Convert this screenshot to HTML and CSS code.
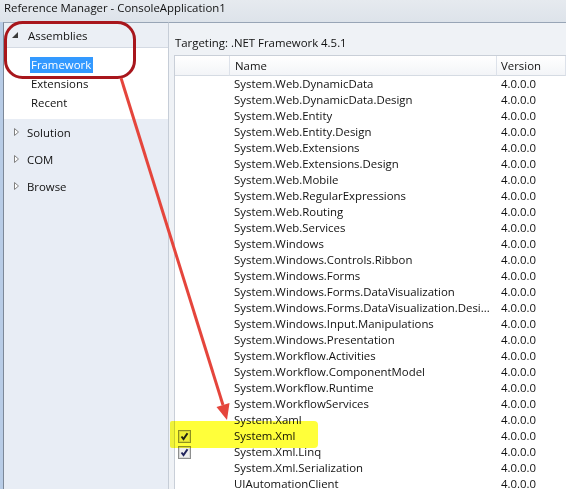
FILE: index.html
```
<!DOCTYPE html>
<html>
<head>
<meta charset="utf-8">
<link rel="stylesheet" href="styles.css">
</head>
<body>
<div class="window">
  <div class="titlebar">Reference Manager - ConsoleApplication1</div>
  <div class="main">
    <div class="nav">
      <div class="nav-head">
        <svg class="tri-open" width="6" height="6" viewBox="0 0 6 6"><polygon points="6,0 6,6 0,6"/></svg>
        <span>Assemblies</span>
      </div>
      <div class="nav-sub">
        <div class="sub-item"><span class="sel">Framework</span></div>
        <div class="sub-item"><span>Extensions</span></div>
        <div class="sub-item"><span>Recent</span></div>
      </div>
      <div class="nav-item"><svg class="tri-closed" width="5" height="8" viewBox="0 0 5 8"><polygon points="0.5,0.5 4.5,4 0.5,7.5"/></svg><span>Solution</span></div>
      <div class="nav-item"><svg class="tri-closed" width="5" height="8" viewBox="0 0 5 8"><polygon points="0.5,0.5 4.5,4 0.5,7.5"/></svg><span>COM</span></div>
      <div class="nav-item"><svg class="tri-closed" width="5" height="8" viewBox="0 0 5 8"><polygon points="0.5,0.5 4.5,4 0.5,7.5"/></svg><span>Browse</span></div>
    </div>
    <div class="content">
      <div class="targeting">Targeting: .NET Framework 4.5.1</div>
      <div class="list">
        <div class="row head">
          <div class="cell check"></div>
          <div class="cell name">Name</div>
          <div class="cell ver">Version</div>
        </div>
        <div class="row"><div class="cell check"></div><div class="cell name">System.Web.DynamicData</div><div class="cell ver">4.0.0.0</div></div>
        <div class="row"><div class="cell check"></div><div class="cell name">System.Web.DynamicData.Design</div><div class="cell ver">4.0.0.0</div></div>
        <div class="row"><div class="cell check"></div><div class="cell name">System.Web.Entity</div><div class="cell ver">4.0.0.0</div></div>
        <div class="row"><div class="cell check"></div><div class="cell name">System.Web.Entity.Design</div><div class="cell ver">4.0.0.0</div></div>
        <div class="row"><div class="cell check"></div><div class="cell name">System.Web.Extensions</div><div class="cell ver">4.0.0.0</div></div>
        <div class="row"><div class="cell check"></div><div class="cell name">System.Web.Extensions.Design</div><div class="cell ver">4.0.0.0</div></div>
        <div class="row"><div class="cell check"></div><div class="cell name">System.Web.Mobile</div><div class="cell ver">4.0.0.0</div></div>
        <div class="row"><div class="cell check"></div><div class="cell name">System.Web.RegularExpressions</div><div class="cell ver">4.0.0.0</div></div>
        <div class="row"><div class="cell check"></div><div class="cell name">System.Web.Routing</div><div class="cell ver">4.0.0.0</div></div>
        <div class="row"><div class="cell check"></div><div class="cell name">System.Web.Services</div><div class="cell ver">4.0.0.0</div></div>
        <div class="row"><div class="cell check"></div><div class="cell name">System.Windows</div><div class="cell ver">4.0.0.0</div></div>
        <div class="row"><div class="cell check"></div><div class="cell name">System.Windows.Controls.Ribbon</div><div class="cell ver">4.0.0.0</div></div>
        <div class="row"><div class="cell check"></div><div class="cell name">System.Windows.Forms</div><div class="cell ver">4.0.0.0</div></div>
        <div class="row"><div class="cell check"></div><div class="cell name">System.Windows.Forms.DataVisualization</div><div class="cell ver">4.0.0.0</div></div>
        <div class="row"><div class="cell check"></div><div class="cell name">System.Windows.Forms.DataVisualization.Desi...</div><div class="cell ver">4.0.0.0</div></div>
        <div class="row"><div class="cell check"></div><div class="cell name">System.Windows.Input.Manipulations</div><div class="cell ver">4.0.0.0</div></div>
        <div class="row"><div class="cell check"></div><div class="cell name">System.Windows.Presentation</div><div class="cell ver">4.0.0.0</div></div>
        <div class="row"><div class="cell check"></div><div class="cell name">System.Workflow.Activities</div><div class="cell ver">4.0.0.0</div></div>
        <div class="row"><div class="cell check"></div><div class="cell name">System.Workflow.ComponentModel</div><div class="cell ver">4.0.0.0</div></div>
        <div class="row"><div class="cell check"></div><div class="cell name">System.Workflow.Runtime</div><div class="cell ver">4.0.0.0</div></div>
        <div class="row"><div class="cell check"></div><div class="cell name">System.WorkflowServices</div><div class="cell ver">4.0.0.0</div></div>
        <div class="row"><div class="cell check"></div><div class="cell name">System.Xaml</div><div class="cell ver">4.0.0.0</div></div>
        <div class="row"><div class="cell check"><svg class="cb" width="13" height="13" viewBox="0 0 13 13"><rect x="0.5" y="0.5" width="12" height="12" class="cb-out"/><rect x="1.5" y="1.5" width="10" height="10" class="cb-in"/><path d="M3.5 6.5 L5.5 9 L9.5 3.2" class="cb-mark"/></svg></div><div class="cell name">System.Xml</div><div class="cell ver">4.0.0.0</div></div>
        <div class="row"><div class="cell check"><svg class="cb" width="13" height="13" viewBox="0 0 13 13"><rect x="0.5" y="0.5" width="12" height="12" class="cb-out"/><rect x="1.5" y="1.5" width="10" height="10" class="cb-in"/><path d="M3.5 6.5 L5.5 9 L9.5 3.2" class="cb-mark"/></svg></div><div class="cell name">System.Xml.Linq</div><div class="cell ver">4.0.0.0</div></div>
        <div class="row"><div class="cell check"></div><div class="cell name">System.Xml.Serialization</div><div class="cell ver">4.0.0.0</div></div>
        <div class="row"><div class="cell check"></div><div class="cell name">UIAutomationClient</div><div class="cell ver">4.0.0.0</div></div>
      </div>
    </div>
  </div>
  <div class="highlight"></div>
  <svg class="annot" width="566" height="489" viewBox="0 0 566 489">
    <rect x="5.5" y="22.5" width="129" height="55" rx="17" ry="17" class="ring"/>
    <line x1="121" y1="78" x2="223" y2="405" class="arrow"/>
    <polygon points="227,420 216.5,407 229.5,403" class="arrow-head"/>
  </svg>
</div>
</body>
</html>
```
FILE: styles.css
```
html, body {
  margin: 0;
  padding: 0;
}
body {
  width: 566px;
  height: 489px;
  overflow: hidden;
  font-family: "Open Sans", "Noto Sans", sans-serif;
  font-size: 11.4px;
  color: #111111;
}
.window {
  position: relative;
  width: 566px;
  height: 489px;
  display: flex;
  flex-direction: column;
  background: #b8cce6;
}
.titlebar {
  height: 22px;
  box-sizing: border-box;
  padding: 0 0 0 4px;
  line-height: 15px;
  background: linear-gradient(#e6eaef, #dde3ea);
  color: #111111;
  white-space: nowrap;
}
.main {
  flex: 1;
  display: flex;
  padding-left: 3px;
  min-height: 0;
}
.nav {
  width: 164px;
  flex: none;
  background: #e8edf5;
  border-left: 1px solid #7c8898;
  border-top: 1px solid #98a5b6;
  border-right: 1px solid #c6cdd7;
}
.nav-head {
  height: 24px;
  border-bottom: 1px solid #d4dae3;
  display: flex;
  align-items: center;
  padding-left: 8px;
  background: #ebeff5;
}
.tri-open {
  margin-right: 10px;
  fill: #3a3a3a;
}
.nav-sub {
  background: #ffffff;
  padding: 7px 0;
}
.sub-item {
  height: 19px;
  padding-left: 26px;
  display: flex;
  align-items: center;
}
.sub-item span {
  display: inline-block;
  height: 16px;
  line-height: 16px;
  padding: 0 2px 0 1px;
}
.sub-item .sel {
  background: #3399ff;
  color: #ffffff;
}
.nav-item {
  height: 26px;
  padding-bottom: 1px;
  display: flex;
  align-items: center;
  padding-left: 10px;
}
.tri-closed {
  margin-right: 8px;
  fill: #ffffff;
  stroke: #808080;
  stroke-width: 1;
}
.content {
  flex: 1;
  min-width: 0;
  background: #eff2f6;
  border-top: 1px solid #98a5b6;
  padding-left: 5px;
  overflow: hidden;
}
.targeting {
  padding: 12px 0 4px 1px;
  line-height: 16px;
  white-space: nowrap;
}
.list {
  background: #ffffff;
  border-left: 1px solid #c9cfd8;
  border-top: 1px solid #c9cfd8;
}
.row {
  display: grid;
  grid-template-columns: 55px 267px 1fr;
  height: 16px;
  line-height: 15px;
  white-space: nowrap;
}
.row.head {
  height: 20px;
  line-height: 19px;
  background: linear-gradient(#ffffff, #f2f4f7);
}
.head .cell {
  box-sizing: border-box;
  border-right: 1px solid #dde2ea;
  border-bottom: 1px solid #d5dbe3;
}
.head .name {
  padding-left: 5px;
}
.cell {
  overflow: hidden;
}
.name {
  padding-left: 4px;
}
.ver {
  padding-left: 4px;
}
.check {
  padding-left: 3px;
}
.cb {
  display: block;
  margin-top: 2px;
}
.cb-out {
  fill: none;
  stroke: #8e8f8f;
}
.cb-in {
  fill: #eeeeee;
  stroke: #d8d8d8;
}
.cb-mark {
  fill: none;
  stroke: #21235c;
  stroke-width: 2;
}
.highlight {
  position: absolute;
  left: 170px;
  top: 421px;
  width: 148px;
  height: 27px;
  border-radius: 2px 4px 4px 2px;
  background: #ffff3a;
  mix-blend-mode: multiply;
}
.annot {
  position: absolute;
  left: 0;
  top: 0;
  pointer-events: none;
}
.ring {
  fill: none;
  stroke: #a8161c;
  stroke-width: 3;
}
.arrow {
  stroke: #e5453c;
  stroke-width: 3;
}
.arrow-head {
  fill: #e5453c;
}
```
